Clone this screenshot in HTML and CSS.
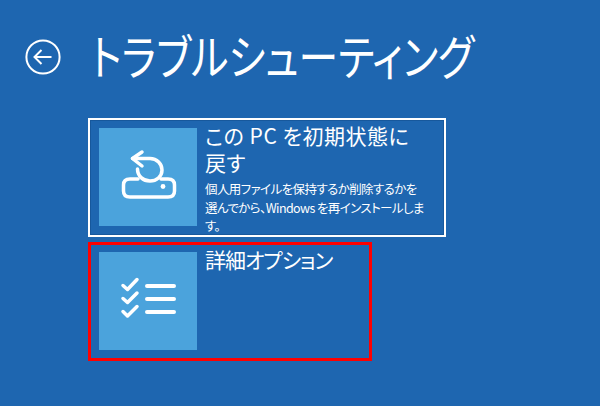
FILE: index.html
```html
<!DOCTYPE html>
<html lang="ja">
<head>
<meta charset="utf-8">
<title>トラブルシューティング</title>
<link rel="stylesheet" href="styles.css">
</head>
<body>
<header class="head">
  <svg class="back" viewBox="0 0 36 36" aria-hidden="true">
    <circle cx="18" cy="18" r="16.6"/>
    <path d="M26.5 18H9.5M16.5 11 9.5 18l7 7"/>
  </svg>
  <h1 class="title">トラブルシューティング</h1>
</header>
<main class="list">
  <section class="card card-focus">
    <div class="tile">
      <svg class="tile-icon" viewBox="0 0 98 98" aria-hidden="true">
        <path d="M33.500 30.500H51C58 30.500 63 36 63 42C63 48.500 57.500 53 51 53C44 53 38.500 48 38.500 41"/>
        <path d="M43 24 33.500 30.500 43 38"/>
        <path d="M39 51H31C26.500 51 24.500 53 24.500 57V63C24.500 67 26.500 69 31 69H69C73.500 69 75.500 67 75.500 63V57C75.500 53 73.500 51 69 51H62"/>
        <circle class="dot" cx="64" cy="58.500" r="2.400"/>
      </svg>
    </div>
    <div class="copy">
      <h2 class="name name-wide">この PC を初期状態に戻す</h2>
      <p class="desc">個人用ファイルを保持するか削除するかを選んでから、Windows を再インストールします。</p>
    </div>
  </section>
  <section class="card card-marked">
    <div class="tile">
      <svg class="tile-icon" viewBox="0 0 98 98" aria-hidden="true">
        <path class="check" d="M24 33.500 28.500 37.500 38 27.500M24 46.500 28.500 50.500 38 41M24 59.500 28.500 64 38 54.500"/>
        <path class="rule" d="M48 34H75M48 47H75M48 60H75"/>
      </svg>
    </div>
    <div class="copy">
      <h2 class="name name-tight">詳細オプション</h2>
    </div>
  </section>
</main>
</body>
</html>
```
FILE: styles.css
```css
* { box-sizing: border-box; }
html, body { height: 100%; }
body {
  margin: 0;
  background: #1e66b0;
  color: #fff;
  font-family: "Noto Sans CJK JP", "Liberation Sans", sans-serif;
  font-feature-settings: "palt";
  overflow: hidden;
}
.head {
  display: flex;
  align-items: center;
  gap: 30px;
  height: 118px;
  padding: 0 0 4px 25px;
}
.back {
  width: 36px;
  height: 36px;
  flex: none;
  fill: none;
  stroke: #fff;
  stroke-width: 2;
}
.title {
  margin: -7px 0 0;
  font-size: 48px;
  font-weight: 400;
  line-height: 60px;
  white-space: nowrap;
  transform: scaleX(0.83);
  transform-origin: left center;
}
.list {
  display: flex;
  flex-direction: column;
  align-items: flex-start;
  gap: 5px;
  padding-left: 88px;
}
.card {
  display: flex;
  height: 119px;
  padding: 8px 0 0 9px;
  gap: 8px;
}
.card-focus {
  width: 358px;
  border: 2px solid #fff;
  outline: 1px solid #17589c;
  outline-offset: -3px;
}
.card-marked {
  width: 284px;
  border: 3px solid #f00;
  padding: 7px 0 0 8px;
}
.tile {
  width: 98px;
  height: 98px;
  flex: none;
  background: #4ba3dc;
}
.tile-icon {
  display: block;
  width: 98px;
  height: 98px;
  fill: none;
  stroke: #fff;
  stroke-width: 3.500;
  stroke-linecap: round;
  stroke-linejoin: round;
}
.tile-icon .dot { fill: #fff; stroke: none; }
.tile-icon .check { stroke-width: 3.500; }
.tile-icon .rule { stroke-width: 4; }
.copy {
  flex: 1;
  min-width: 0;
  margin-top: -6px;
  padding-right: 17px;
}
.name {
  margin: 0;
  font-size: 21px;
  font-weight: 400;
  line-height: 27px;
}
.name-wide { letter-spacing: 0.5px; }
.name-tight { letter-spacing: -1px; }
.desc {
  margin: 4px 0 0;
  font-size: 12.500px;
  letter-spacing: -0.6px;
  line-height: 18.500px;
}
```
